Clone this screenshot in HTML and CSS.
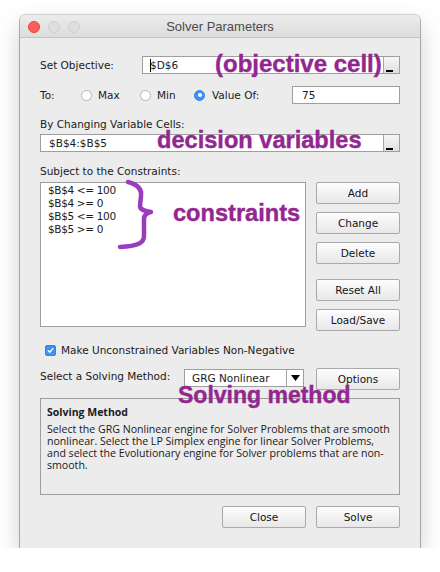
FILE: index.html
```html
<!DOCTYPE html>
<html>
<head>
<meta charset="utf-8">
<title>Solver Parameters</title>
<link rel="stylesheet" href="styles.css">
</head>
<body>
<div class="stage">
  <div class="window">
    <div class="titlebar">
      <div class="lights">
        <span class="light red"></span>
        <span class="light"></span>
        <span class="light"></span>
      </div>
      <div class="title">Solver Parameters</div>
    </div>

    <div class="content">
      <div class="row">
        <span class="lbl lbl-obj">Set Objective:</span>
        <div class="field field-obj">
          <span class="caret"></span><span class="ftext">$D$6</span>
          <span class="pick"></span>
        </div>
      </div>

      <div class="row row-to">
        <span class="lbl lbl-to">To:</span>
        <span class="opt opt-max"><span class="radio"></span><span>Max</span></span>
        <span class="opt opt-min"><span class="radio"></span><span>Min</span></span>
        <span class="opt opt-val"><span class="radio on"></span><span>Value Of:</span></span>
        <div class="field field-val"><span class="ftext">75</span></div>
      </div>

      <div class="lbl sect sect-vars">By Changing Variable Cells:</div>
      <div class="field field-vars">
        <span class="ftext">$B$4:$B$5</span>
        <span class="pick"></span>
      </div>

      <div class="lbl sect sect-cons">Subject to the Constraints:</div>
      <div class="cons">
        <div class="list">
          <div>$B$4 &lt;= 100</div>
          <div>$B$4 &gt;= 0</div>
          <div>$B$5 &lt;= 100</div>
          <div>$B$5 &gt;= 0</div>
        </div>
        <div class="btns">
          <div class="btn">Add</div>
          <div class="btn">Change</div>
          <div class="btn">Delete</div>
          <div class="btn btn-reset">Reset All</div>
          <div class="btn">Load/Save</div>
        </div>
      </div>

      <div class="chk-row">
        <span class="check"><svg width="11" height="11" viewBox="0 0 11 11"><path d="M2.6 5.6 L4.6 7.6 L8.4 3.2" fill="none" stroke="#fff" stroke-width="1.6" stroke-linecap="round" stroke-linejoin="round"/></svg></span>
        <span>Make Unconstrained Variables Non-Negative</span>
      </div>

      <div class="method">
        <span class="lbl lbl-method">Select a Solving Method:</span>
        <div class="select">
          <span class="ftext">GRG Nonlinear</span>
          <span class="arrow"><svg width="9" height="6" viewBox="0 0 9 6"><path d="M0 0 H9 L4.5 6 Z" fill="#000"/></svg></span>
        </div>
        <div class="btn btn-options">Options</div>
      </div>

      <div class="desc">
        <div class="desc-title">Solving Method</div>
        <div class="desc-text">Select the GRG Nonlinear engine for Solver Problems that are smooth<br>nonlinear. Select the LP Simplex engine for linear Solver Problems,<br>and select the Evolutionary engine for Solver problems that are non-<br>smooth.</div>
      </div>

      <div class="footer">
        <div class="btn">Close</div>
        <div class="btn">Solve</div>
      </div>
    </div>

    <span class="note note-obj">(objective cell)</span>
    <span class="note note-dec">decision variables</span>
    <span class="note note-con">constraints</span>
    <span class="note note-sol">Solving method</span>
    <svg class="brace" width="60" height="76" viewBox="0 0 60 76">
      <path d="M28,7 C36,9 42,13 41,21 L40,31 C40,35 45,36 51,37 C46,38 44,40 44,44 L44,61 C44,68 38,71 20,72" fill="none" stroke="#9a3dbd" stroke-width="4.5" stroke-linecap="round" stroke-linejoin="round"/>
    </svg>
  </div>
</div>
</body>
</html>
```

FILE: styles.css
```css
* { box-sizing: border-box; }

html, body {
  margin: 0;
  padding: 0;
  background: #ffffff;
}

body {
  font-family: "DejaVu Sans", sans-serif;
  font-size: 10.5px;
  color: #1a1a1a;
}

.stage {
  padding: 15px 20px 0 20px;
}

.window {
  position: relative;
  width: 400px;
  height: 533px;
  background: #ececec;
  border-radius: 5px 5px 0 0;
  box-shadow: 0 0 0 1px rgba(0, 0, 0, 0.16), 0 1px 0 1px rgba(0, 0, 0, 0.14), 0 10px 24px rgba(0, 0, 0, 0.2);
}

/* title bar */
.titlebar {
  position: relative;
  height: 23px;
  border-radius: 5px 5px 0 0;
  background: linear-gradient(#ececec, #dcdcdc);
  border-bottom: 1px solid #c4c4c4;
  display: flex;
  align-items: center;
  justify-content: center;
}

.lights {
  position: absolute;
  left: 8px;
  top: 6px;
  display: flex;
  gap: 8px;
}

.light {
  width: 12px;
  height: 12px;
  border-radius: 50%;
  background: #dedede;
  border: 1px solid #d0d0d0;
}

.light.red {
  background: #fc5f57;
  border-color: #e2463f;
}

.title {
  font-family: "Liberation Sans", Arial, sans-serif;
  font-size: 13px;
  color: #4b4b4b;
}

/* content */
.content {
  padding: 18px 20px 0 20px;
  display: flex;
  flex-direction: column;
}

.row {
  display: flex;
  align-items: center;
  height: 18px;
}

.row-to {
  margin-top: 12px;
}

.lbl {
  line-height: 14px;
  white-space: nowrap;
}

.lbl-obj { width: 102px; }
.lbl-to { width: 41px; }

.field {
  height: 18px;
  background: #ffffff;
  border: 1px solid #9e9e9e;
  display: flex;
  align-items: center;
  position: relative;
}

.ftext {
  white-space: nowrap;
  line-height: 14px;
}

.field-obj {
  width: 258px;
  padding-left: 7px;
}

.caret {
  position: absolute;
  left: 7px;
  top: 2px;
  width: 1px;
  height: 13px;
  background: #000;
}

.field-val {
  width: 108px;
  padding-left: 9px;
}

.field-vars {
  margin-top: 3px;
  width: 360px;
  padding-left: 8px;
}

.pick {
  margin-left: auto;
  align-self: stretch;
  width: 16px;
  background: linear-gradient(#f7f7f7, #dedede);
  border-left: 1px solid #a4a4a4;
  position: relative;
}

.pick::after {
  content: "";
  position: absolute;
  left: 2px;
  bottom: 1px;
  width: 7px;
  height: 2px;
  background: #000;
}

.opt {
  display: flex;
  align-items: center;
  gap: 6px;
}

.opt-max { width: 59px; }
.opt-min { width: 54px; }
.opt-val { width: 98px; gap: 7px; }

.radio {
  width: 11px;
  height: 11px;
  border-radius: 50%;
  background: #ffffff;
  border: 1px solid #b4b4b4;
  position: relative;
  flex: none;
}

.radio.on {
  background: #3b93f5;
  border-color: #2f84e4;
}

.radio.on::after {
  content: "";
  position: absolute;
  left: 2.5px;
  top: 2.5px;
  width: 4px;
  height: 4px;
  border-radius: 50%;
  background: #ffffff;
}

.sect-vars { margin-top: 13px; }
.sect-cons { margin-top: 12px; }

/* constraints */
.cons {
  margin-top: 4px;
  display: flex;
  gap: 10px;
  align-items: flex-start;
}

.list {
  width: 266px;
  height: 145px;
  background: #ffffff;
  border: 1px solid #9e9e9e;
  padding: 1px 0 0 7px;
  line-height: 13px;
  letter-spacing: -0.35px;
  white-space: nowrap;
}

.btns {
  width: 84px;
  display: flex;
  flex-direction: column;
  gap: 8px;
}

.btn {
  height: 22px;
  width: 84px;
  border: 1px solid #a9a9a9;
  border-radius: 2px;
  background: linear-gradient(#fdfdfd, #f1f1f1 55%, #e8e8e8);
  display: flex;
  align-items: center;
  justify-content: center;
  color: #151515;
  white-space: nowrap;
}

.btn-reset { margin-top: 7px; }

/* checkbox */
.chk-row {
  margin-top: 12px;
  height: 14px;
  display: flex;
  align-items: center;
  gap: 5px;
  padding-left: 5px;
  line-height: 14px;
}

.check {
  width: 11px;
  height: 11px;
  border-radius: 2px;
  background: #3b93f5;
  border: 1px solid #2f84e4;
  display: flex;
  align-items: center;
  justify-content: center;
}

.check svg { display: block; }

/* method */
.method {
  margin-top: 11px;
  height: 22px;
  display: flex;
  align-items: flex-start;
}

.lbl-method {
  width: 144px;
  margin-top: 1px;
}

.select {
  margin-top: 1px;
  width: 120px;
  height: 18px;
  background: #ffffff;
  border: 1px solid #9e9e9e;
  display: flex;
  align-items: center;
  padding-left: 7px;
}

.arrow {
  margin-left: auto;
  align-self: stretch;
  width: 17px;
  border-left: 1px solid #a4a4a4;
  display: flex;
  align-items: center;
  justify-content: center;
}

.btn-options { margin-left: 12px; }

/* description */
.desc {
  margin-top: 8px;
  height: 97px;
  border: 1px solid #9e9e9e;
  padding: 6px 6px 0 6px;
}

.desc-title {
  font-family: "Open Sans", sans-serif;
  font-weight: bold;
  font-size: 10.5px;
  line-height: 14px;
}

.desc-text {
  margin-top: 4px;
  font-family: "Open Sans", sans-serif;
  font-size: 10.6px;
  line-height: 12px;
  white-space: nowrap;
}

.footer {
  margin-top: 11px;
  display: flex;
  justify-content: flex-end;
  gap: 10px;
}

/* annotations */
.note {
  position: absolute;
  font-family: "Liberation Sans", Arial, sans-serif;
  font-weight: bold;
  font-size: 24px;
  line-height: 24px;
  color: #93278f;
  -webkit-text-stroke: 0.4px #93278f;
  white-space: nowrap;
}

.note-obj { left: 195px; top: 37px; }
.note-dec { left: 137px; top: 113px; font-size: 23.6px; }
.note-con { left: 153px; top: 186px; font-size: 23.6px; }
.note-sol { left: 158px; top: 368px; font-size: 23px; }

.brace {
  position: absolute;
  left: 80px;
  top: 160px;
}
```
